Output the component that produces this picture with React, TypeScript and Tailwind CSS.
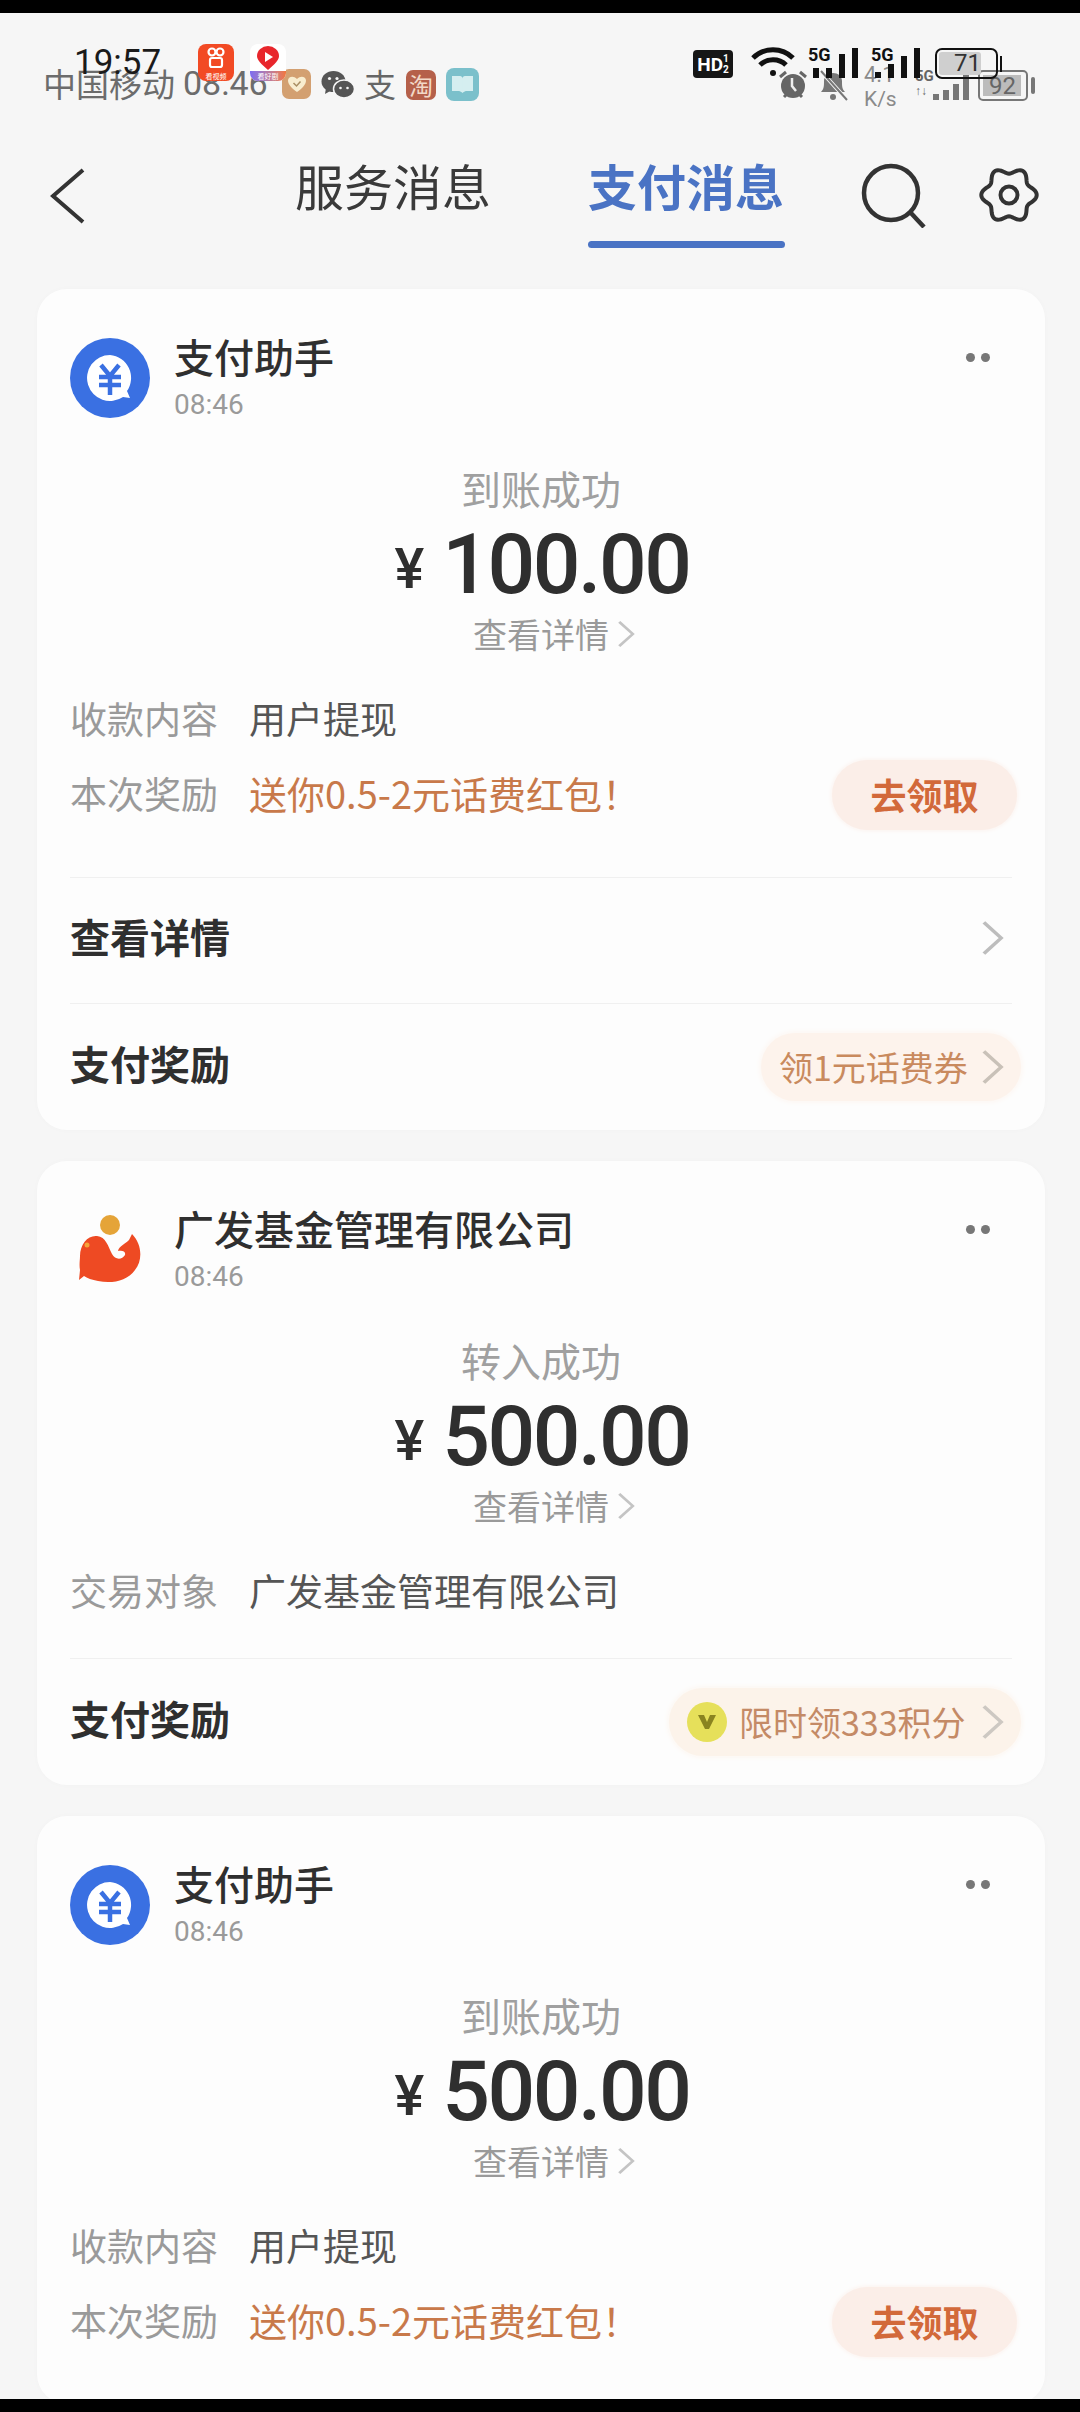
import type { ReactNode } from "react";

const gearPath = (() => {
  const pts: string[] = [];
  for (let i = 0; i < 120; i++) {
    const t = (i / 120) * Math.PI * 2;
    const r = 24.5 - 3.2 * Math.cos(6 * t);
    const x = 30 + r * Math.sin(t);
    const y = 30 - r * Math.cos(t);
    pts.push(`${i === 0 ? "M" : "L"}${x.toFixed(2)} ${y.toFixed(2)}`);
  }
  return pts.join(" ") + "Z";
})();

function Chevron({ className, w = 16, h = 30 }: { className: string; w?: number; h?: number }) {
  return (
    <svg width={w} height={h} viewBox="0 0 16 30" fill="none" preserveAspectRatio="none" className={className}>
      <path d="M2 2l12 13L2 28" stroke="currentColor" strokeWidth="2.6" />
    </svg>
  );
}

function Signal({ bars, className }: { bars: number[]; className: string }) {
  return (
    <div className={`flex items-end gap-[4px] ${className}`}>
      {bars.map((b, i) => (
        <div key={i} className="w-[6px] bg-current" style={{ height: b }} />
      ))}
    </div>
  );
}

function StatusBar() {
  return (
    <div className="relative h-[137px]">
      {/* notification bar below */}
      <div className="absolute left-[43px] top-[47px] flex h-[46px] items-center text-[#6c6c6c]">
        <span className="text-[33px] leading-none font-['Noto_Sans_CJK_SC',sans-serif]">中国移动</span>
        <span className="ml-[8px] text-[34px] leading-none font-['Roboto',sans-serif]">08:46</span>
      </div>
      <div className="absolute left-[282px] top-[56px] flex h-[30px] w-[29px] items-center justify-center rounded-[7px] bg-[#d3a071]">
        <svg width="20" height="18" viewBox="0 0 20 18">
          <path d="M10 17C4 13 1 9 1 5.500C1 2 6 0 10 4c4-4 9-2 9 1.500C19 9 16 13 10 17Z" fill="#f8edcf" />
          <path d="M6.500 8l3 3 4-4.500" stroke="#a98f63" strokeWidth="1.500" fill="none" />
        </svg>
      </div>
      <svg width="34" height="30" viewBox="0 0 34 30" className="absolute left-[321px] top-[57px]">
        <ellipse cx="12.500" cy="11.500" rx="12" ry="10.500" fill="#555" />
        <path d="M5 18l-1 6 7-4Z" fill="#555" />
        <ellipse cx="23" cy="19" rx="10.500" ry="9" fill="#555" stroke="#f6f6f6" strokeWidth="1.500" />
        <circle cx="8.500" cy="8.500" r="1.600" fill="#f6f6f6" />
        <circle cx="16" cy="8.500" r="1.600" fill="#f6f6f6" />
        <circle cx="19.500" cy="18" r="1.300" fill="#f6f6f6" />
        <circle cx="26.500" cy="18" r="1.300" fill="#f6f6f6" />
      </svg>
      <span className="absolute left-[364px] top-[53px] text-[32px] leading-[34px] text-[#666] font-['Noto_Sans_CJK_SC',sans-serif]">支</span>
      <div className="absolute left-[406px] top-[57px] flex h-[30px] w-[30px] items-center justify-center rounded-[7px] bg-[#b5604a] text-[24px] leading-none text-[#f2d9c8] font-['Noto_Sans_CJK_SC',sans-serif]">
        淘
      </div>
      <div className="absolute left-[446px] top-[55px] flex h-[33px] w-[33px] items-center justify-center rounded-[8px] bg-[#7bc0cb]">
        <svg width="23" height="19" viewBox="0 0 23 19">
          <path d="M1 1h8c1.500 0 2.500 1 2.500 2.500V18C10.500 17 9 16 8 16H1ZM22 1h-8c-1.500 0-2.500 1-2.500 2.500V18c1-1 2.500-2 3.500-2h7Z" fill="#d5eef0" />
        </svg>
      </div>

      <svg width="32" height="30" viewBox="0 0 32 30" className="absolute left-[777px] top-[57px]">
        <circle cx="16" cy="16" r="12" fill="#666" />
        <path d="M3 7l6-5M29 7l-6-5M7 27l3-3M25 27l-3-3" stroke="#666" strokeWidth="3" />
        <path d="M15 8v8l4 5" stroke="#eee" strokeWidth="2.500" fill="none" />
      </svg>
      <svg width="32" height="34" viewBox="0 0 32 34" className="absolute left-[817px] top-[55px]">
        <path d="M4 24c3-3 3-6 3-11 0-5 4-8 9-8s9 3 9 8c0 5 0 8 3 11Z" fill="#777" />
        <circle cx="16" cy="29" r="3" fill="#777" />
        <path d="M3 2l27 30" stroke="#f6f6f6" strokeWidth="4" />
        <path d="M4 3l26 29" stroke="#777" strokeWidth="2" />
      </svg>
      <div className="absolute left-[864px] top-[50px] text-[#8a8a8a] font-['Roboto',sans-serif]">
        <div className="text-[22px] leading-[24px]">4.1</div>
        <div className="text-[21px] leading-[24px]">K/s</div>
      </div>
      <div className="absolute left-[915px] top-[56px] text-[#666] font-['Roboto',sans-serif]">
        <span className="block text-[15px] font-bold leading-[15px]">5G</span>
        <span className="block text-[12px] font-bold leading-[14px]">↑↓</span>
      </div>
      <Signal bars={[6, 10, 16, 26]} className="absolute left-[933px] top-[57px] h-[30px] gap-[2px] text-[#777]" />
      <div className="absolute left-[978px] top-[57px] flex h-[31px] w-[50px] items-center rounded-[5px] border-[2px] border-[#777] p-[3px]">
        <div className="h-full w-[38px] bg-[#bcbcbc]" />
        <span className="absolute left-[9px] top-[1px] text-[24px] leading-[26px] text-[#666] font-['Roboto',sans-serif]">92</span>
      </div>
      <div className="absolute left-[1031px] top-[64px] h-[17px] w-[4px] rounded-sm bg-[#777]" />

      {/* status bar on top */}
      <span className="absolute left-[74px] top-[30px] text-[35px] leading-[40px] text-[#1a1a1a] font-['Roboto',sans-serif]">19:57</span>
      <div className="absolute left-[198px] top-[31px] flex h-[37px] w-[36px] flex-col items-center justify-between overflow-hidden rounded-[8px] bg-[#f24a24] pt-[3px]">
        <svg width="18" height="24" viewBox="0 0 18 24" fill="none" stroke="#fff" strokeWidth="2.200">
          <circle cx="5" cy="5" r="3.500" />
          <circle cx="13" cy="5" r="3.500" />
          <rect x="3" y="11" width="12" height="9" rx="2" />
        </svg>
        <span className="h-[9px] text-[7px] leading-[9px] text-white font-['Noto_Sans_CJK_SC',sans-serif]">看视频</span>
      </div>
      <div className="absolute left-[250px] top-[31px] flex h-[37px] w-[36px] flex-col items-center justify-between overflow-hidden rounded-[8px] bg-white pt-[2px]">
        <svg width="24" height="25" viewBox="0 0 24 25">
          <path d="M12 24C5 18 1 14 1 10a11 10 0 0 1 22 0c0 4-4 8-11 14Z" fill="#e8262c" />
          <path d="M9 6l8 5-8 5Z" fill="#fff" />
        </svg>
        <span className="h-[10px] w-full bg-gradient-to-r from-[#7e6cf0] to-[#f2763a] text-center text-[7px] leading-[10px] text-white font-['Noto_Sans_CJK_SC',sans-serif]">
          看好剧
        </span>
      </div>

      <div className="absolute left-[693px] top-[37px] flex h-[28px] w-[40px] items-center justify-center rounded-[4px] bg-[#161616] text-white font-['Roboto',sans-serif]">
        <span className="text-[19px] font-bold leading-none">HD</span>
        <span className="flex flex-col text-[10px] font-bold leading-[11px]">
          <span>1</span>
          <span>2</span>
        </span>
      </div>
      <svg width="44" height="34" viewBox="0 0 44 34" fill="none" stroke="#111" strokeWidth="5" className="absolute left-[751px] top-[32px]">
        <path d="M2 13c11-11 29-11 40 0" />
        <path d="M9 20c7-7 19-7 26 0" />
        <circle cx="22" cy="28" r="3" fill="#111" stroke="none" />
      </svg>
      <span className="absolute left-[808px] top-[32px] text-[18px] font-bold leading-[20px] text-[#111] font-['Roboto',sans-serif]">5G</span>
      <Signal bars={[10, 10, 24, 30]} className="absolute left-[813px] top-[35px] h-[30px] gap-[7px] text-[#111]" />
      <span className="absolute left-[871px] top-[32px] text-[18px] font-bold leading-[20px] text-[#111] font-['Roboto',sans-serif]">5G</span>
      <Signal bars={[6, 14, 22, 30]} className="absolute left-[875px] top-[35px] h-[30px] gap-[7px] text-[#111]" />
      <div className="absolute left-[935px] top-[35px] flex h-[31px] w-[63px] rounded-[7px] border-[2px] border-[#111] p-[2px]">
        <div className="h-full w-[42px] rounded-[3px] bg-[#cfcfcf]" />
        <span className="absolute left-[17px] top-[0px] text-[24px] leading-[27px] text-[#333] font-['Roboto',sans-serif]">71</span>
      </div>
      <div className="absolute left-[1000px] top-[43px] h-[16px] w-[2px] bg-[#111]" />
    </div>
  );
}

function NavBar() {
  return (
    <div className="flex h-[139px] items-start">
      <svg width="36" height="56" viewBox="0 0 36 56" fill="none" className="ml-[50px] mt-[18px] shrink-0">
        <path d="M33 2L3 28l30 26" stroke="#333" strokeWidth="4" />
      </svg>
      <div className="ml-[209px] w-[196px] text-[49px] leading-[70px] text-[#3a3a3a] whitespace-nowrap">服务消息</div>
      <div className="ml-[97px] flex w-[197px] flex-col">
        <div className="text-[49px] font-bold leading-[70px] text-[#4a73c4] whitespace-nowrap">支付消息</div>
        <div className="mt-[21px] h-[7px] rounded-full bg-[#4a73c4]" />
      </div>
      <svg width="66" height="66" viewBox="0 0 66 66" fill="none" stroke="#333" strokeWidth="4.500" className="ml-[75px] mt-[12px] shrink-0">
        <circle cx="31" cy="31" r="27" />
        <path d="M50 50l14 15" />
      </svg>
      <svg width="60" height="60" viewBox="0 0 60 60" fill="none" stroke="#333" strokeWidth="4" className="ml-[53px] mt-[15px] shrink-0">
        <path d={gearPath} />
        <circle cx="30" cy="30" r="8.500" />
      </svg>
    </div>
  );
}

function YuanAvatar() {
  return (
    <div className="flex h-[80px] w-[80px] items-center justify-center rounded-full bg-[#3a70e2]">
      <svg width="48" height="48" viewBox="0 0 48 48">
        <path d="M24 1a23 23 0 1 0 13 42l7 1-3-7A23 23 0 0 0 24 1Z" fill="#fff" />
        <path d="M15 11l9 11 9-11M13 23h22M13 31h22M24 22v19" fill="none" stroke="#3a70e2" strokeWidth="4.500" />
      </svg>
    </div>
  );
}

function FundAvatar() {
  return (
    <svg width="80" height="84" viewBox="0 0 80 84" className="-mt-[2px]">
      <circle cx="40" cy="17" r="10" fill="#e5a438" />
      <path
        d="M10 48C10 36 18 27 27 28C36 29 38 38 42 46C45 52 52 52 55 47C56 43 52 42 48 43C49 38 55 36 59 32L62 26C72 36 73 52 65 62C57 73 42 76 28 73C22 72 17 70 14 68L9 72L10 62C9 57 10 52 10 48Z"
        fill="#ee4a23"
      />
      <circle cx="17" cy="37" r="2.500" fill="#f6a33a" />
    </svg>
  );
}

function CardHeader({ avatar, title }: { avatar: ReactNode; title: string }) {
  return (
    <div className="flex pl-[33px] pr-[55px] pt-[42px]">
      <div className="mt-[7px] h-[80px] w-[80px] shrink-0">{avatar}</div>
      <div className="ml-[24px] flex-1">
        <div className="text-[40px] font-medium leading-[50px] text-[#2f2f2f]">{title}</div>
        <div className="mt-[6px] text-[28px] leading-[36px] text-[#9a9a9a] font-['Roboto',sans-serif]">08:46</div>
      </div>
      <div className="mt-[22px] flex h-[10px] gap-[6px]">
        <div className="h-[9px] w-[9px] rounded-full bg-[#777]" />
        <div className="h-[9px] w-[9px] rounded-full bg-[#777]" />
      </div>
    </div>
  );
}

function Summary({ label, amount }: { label: string; amount: string }) {
  return (
    <div className="flex flex-col items-center">
      <div className="mt-[40px] text-[40px] leading-[50px] text-[#a0a0a0]">{label}</div>
      <div className="mt-[4px] flex h-[96px] items-center pl-[2px] text-[#2f2f2f] font-['Roboto',sans-serif]">
        <span className="mr-[18px] mt-[8px] text-[56px] font-medium leading-none">¥</span>
        <span className="text-[84px] font-medium leading-none tracking-[-2.500px]">{amount}</span>
      </div>
      <div className="-mt-px flex h-[44px] items-center pl-[26px] text-[34px] leading-[44px] text-[#9a9a9a]">
        查看详情
        <Chevron className="ml-[8px] text-[#c4c4c4]" w={18} h={28} />
      </div>
    </div>
  );
}

function InfoRow({ label, children, className }: { label: string; children: ReactNode; className: string }) {
  return (
    <div className={`flex items-center pl-[33px] pr-[28px] ${className}`}>
      <span className="w-[179px] shrink-0 pb-[5px] text-[37px] leading-[50px] text-[#9a9a9a]">{label}</span>
      {children}
    </div>
  );
}

function RewardRows() {
  return (
    <>
      <InfoRow label="收款内容" className="mt-[39px] h-[50px]">
        <span className="pb-[5px] text-[37px] leading-[50px] text-[#555]">用户提现</span>
      </InfoRow>
      <InfoRow label="本次奖励" className="mt-[15px] h-[70px]">
        <span className="flex-1 pb-[5px] text-[38px] leading-[50px] text-[#c8794a]">送你0.5-2元话费红包！</span>
        <div className="flex h-[70px] w-[185px] items-center justify-center rounded-full bg-[#fbeee8] pb-[2px] text-[36px] font-bold text-[#d2693a] shadow-[0_0_5px_#fbeee8]">
          去领取
        </div>
      </InfoRow>
    </>
  );
}

function LinkRow({ label, right, rowClass }: { label: string; right: ReactNode; rowClass: string }) {
  return (
    <div className={`mx-[33px] flex items-center justify-between border-t border-[#f0f0f0] ${rowClass}`}>
      <span className="pb-[9px] text-[40px] font-bold leading-[50px] text-[#2f2f2f]">{label}</span>
      {right}
    </div>
  );
}

function Card({ children }: { children: ReactNode }) {
  return <div className="mb-[31px] overflow-hidden rounded-[30px] bg-[#fdfdfd] shadow-[0_0_6px_rgba(0,0,0,0.02)]">{children}</div>;
}

export default function App() {
  return (
    <div className="relative h-[2412px] w-[1080px] overflow-hidden bg-[#f6f6f6] font-['Noto_Sans_CJK_SC',sans-serif]">
      <div className="h-[13px] bg-black" />
      <StatusBar />
      <NavBar />

      <div className="pl-[37px] pr-[35px]">
        {/* card 1 */}
        <Card>
          <CardHeader avatar={<YuanAvatar />} title="支付助手" />
          <Summary label="到账成功" amount="100.00" />
          <RewardRows />
          <div className="h-[47px]" />
          <LinkRow
            rowClass="h-[126px]"
            label="查看详情"
            right={<Chevron className="mb-[5px] mr-[8px] text-[#bdbdbd]" w={23} h={36} />}
          />
          <LinkRow
            rowClass="h-[127px]"
            label="支付奖励"
            right={
              <div className="-mr-[9px] flex h-[68px] w-[260px] items-center rounded-full bg-[#fdf3ec] pl-[18px] shadow-[0_0_6px_#fdf3ec]">
                <span className="w-[198px] pb-[2px] text-[34px] text-[#c98a5e]">领1元话费券</span>
                <Chevron className="ml-[4px] text-[#c9c1b8]" w={23} h={36} />
              </div>
            }
          />
        </Card>

        {/* card 2 */}
        <Card>
          <CardHeader avatar={<FundAvatar />} title="广发基金管理有限公司" />
          <Summary label="转入成功" amount="500.00" />
          <InfoRow label="交易对象" className="mt-[39px] h-[50px]">
            <span className="pb-[5px] text-[37px] leading-[50px] text-[#555]">广发基金管理有限公司</span>
          </InfoRow>
          <div className="h-[41px]" />
          <LinkRow
            rowClass="h-[127px]"
            label="支付奖励"
            right={
              <div className="-mr-[9px] flex h-[68px] w-[352px] items-center rounded-full bg-[#fcf3ea] pl-[18px] shadow-[0_0_6px_#fcf3ea]">
                <div className="flex h-[40px] w-[40px] items-center justify-center rounded-full bg-[#e6e05a]">
                  <svg width="20" height="16" viewBox="0 0 20 16">
                    <path d="M1 1h6l3 7 3-7h6l-7 14H8Z" fill="#8a8420" />
                  </svg>
                </div>
                <span className="ml-[12px] w-[228px] whitespace-nowrap pb-[2px] text-[34px] text-[#c48a66]">限时领333积分</span>
                <Chevron className="ml-[14px] text-[#cdc8c2]" w={23} h={36} />
              </div>
            }
          />
        </Card>

        {/* card 3, cut off by the bottom bar */}
        <Card>
          <CardHeader avatar={<YuanAvatar />} title="支付助手" />
          <Summary label="到账成功" amount="500.00" />
          <RewardRows />
          <div className="h-[47px]" />
        </Card>
      </div>

      <div className="absolute bottom-0 left-0 h-[13px] w-full bg-black" />
    </div>
  );
}
